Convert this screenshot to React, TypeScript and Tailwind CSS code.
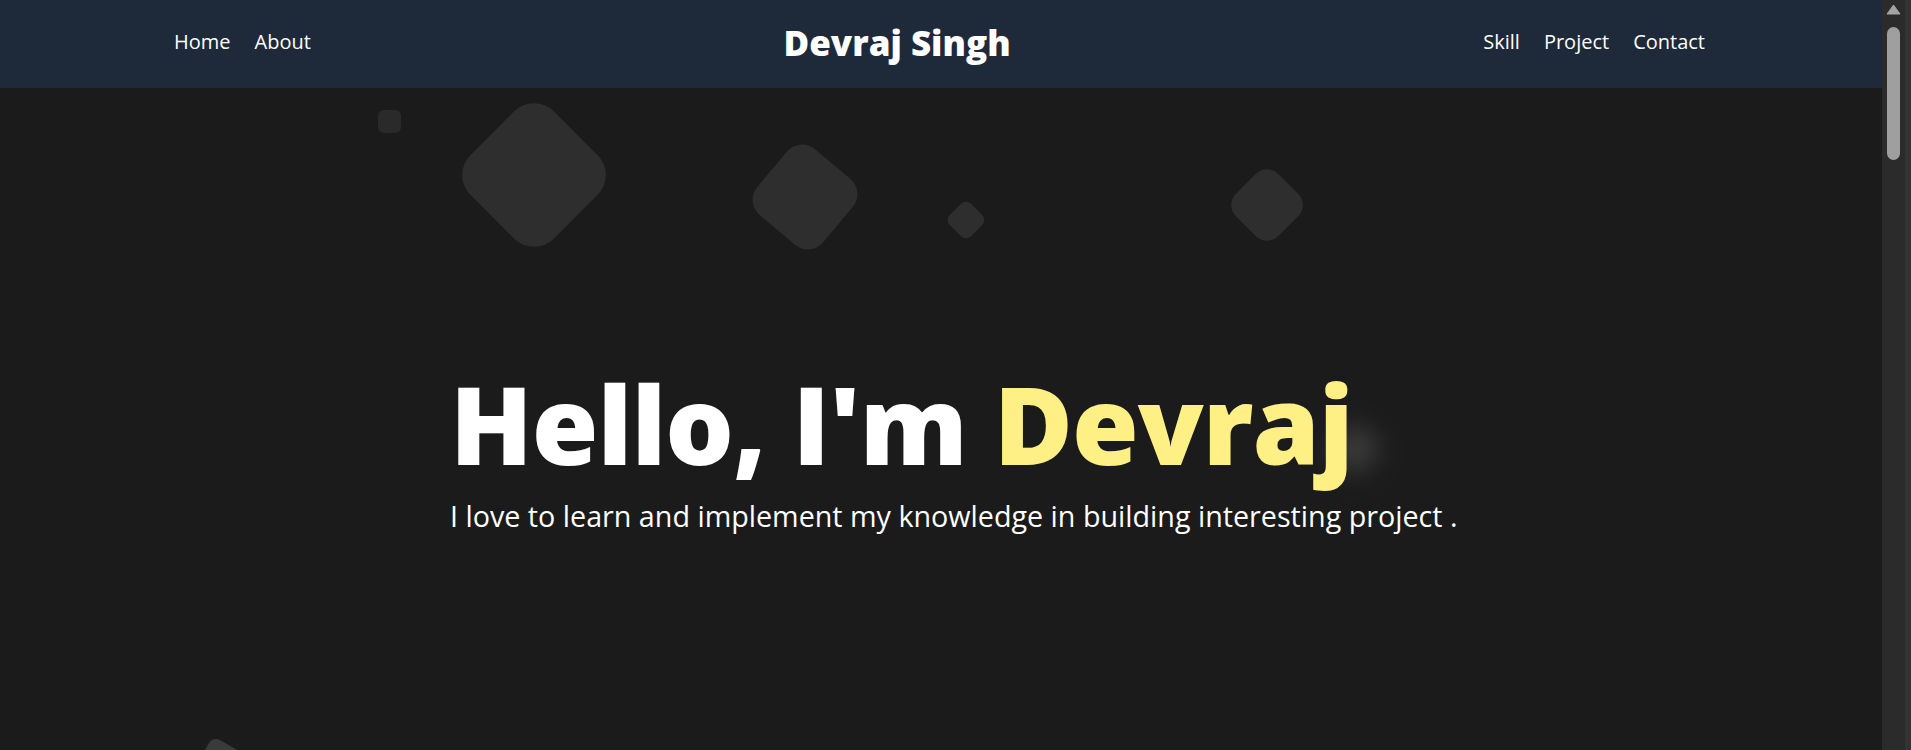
import React from 'react';

const navLeft = ['Home', 'About'];
const navRight = ['Skill', 'Project', 'Contact'];

function Scrollbar() {
  return (
    <div className="flex h-full shrink-0">
      <div className="flex w-[23px] flex-col items-center bg-[#2b2b2b]">
        <svg width="15" height="11" viewBox="0 0 15 11" className="mt-[4px]">
          <path d="M7.5 1 L14 10 L1 10 Z" fill="#a3a3a3" stroke="#a3a3a3" strokeLinejoin="round" />
        </svg>
        <div className="mt-[12px] h-[133px] w-[13px] rounded-full bg-[#9f9f9f]" />
      </div>
      <div className="w-[6px] bg-[#333333]" />
    </div>
  );
}

export default function App() {
  return (
    <div className="flex h-[750px] w-full overflow-hidden bg-[#1b1b1b] font-['Open_Sans',sans-serif]">
      <div className="flex min-w-0 flex-1 flex-col">
        <nav className="flex h-[88px] shrink-0 items-center justify-between bg-gray-800 pl-[174px] pr-[177px] pb-[4px] text-white">
          <div className="flex items-center gap-6 text-[20px]">
            {navLeft.map((item) => (
              <a key={item} href={`#${item.toLowerCase()}`}>{item}</a>
            ))}
          </div>
          <span className="text-[35px] font-extrabold leading-none">Devraj Singh</span>
          <div className="flex items-center gap-6 text-[20px]">
            {navRight.map((item) => (
              <a key={item} href={`#${item.toLowerCase()}`}>{item}</a>
            ))}
          </div>
        </nav>

        <main className="relative flex-1 overflow-hidden">
          {/* floating shapes */}
          <div className="absolute left-[378px] top-[22px] h-[23px] w-[23px] rounded-[6px] bg-[#2a2a2a]" />
          <div className="absolute left-[475px] top-[28px] h-[118px] w-[118px] rotate-45 rounded-[28px] bg-[#2e2e2e]" />
          <div className="absolute left-[762px] top-[66px] h-[86px] w-[86px] rotate-[40deg] rounded-[20px] bg-[#2e2e2e]" />
          <div className="absolute left-[951px] top-[117px] h-[30px] w-[30px] rotate-45 rounded-[7px] bg-[#2e2e2e]" />
          <div className="absolute left-[1237px] top-[87px] h-[60px] w-[60px] rotate-45 rounded-[16px] bg-[#2e2e2e]" />
          <div className="absolute left-[1334px] top-[340px] h-[42px] w-[42px] rotate-45 rounded-[12px] bg-[#3a3a3a] blur-md" />
          <div className="absolute left-[194px] top-[659px] h-[60px] w-[60px] rotate-[30deg] rounded-[8px] bg-[#3a3a3a]" />

          <div className="relative pl-[450px] pt-[282px]">
            <h1 className="text-[108px] font-extrabold leading-none tracking-[-1px] text-white">
              Hello, I'm <span className="text-yellow-200">Devraj</span>
            </h1>
            <p className="mt-4 text-[28.7px] leading-[1.5] text-white">
              I love to learn and implement my knowledge in building interesting project .
            </p>
          </div>
        </main>
      </div>
      <Scrollbar />
    </div>
  );
}
